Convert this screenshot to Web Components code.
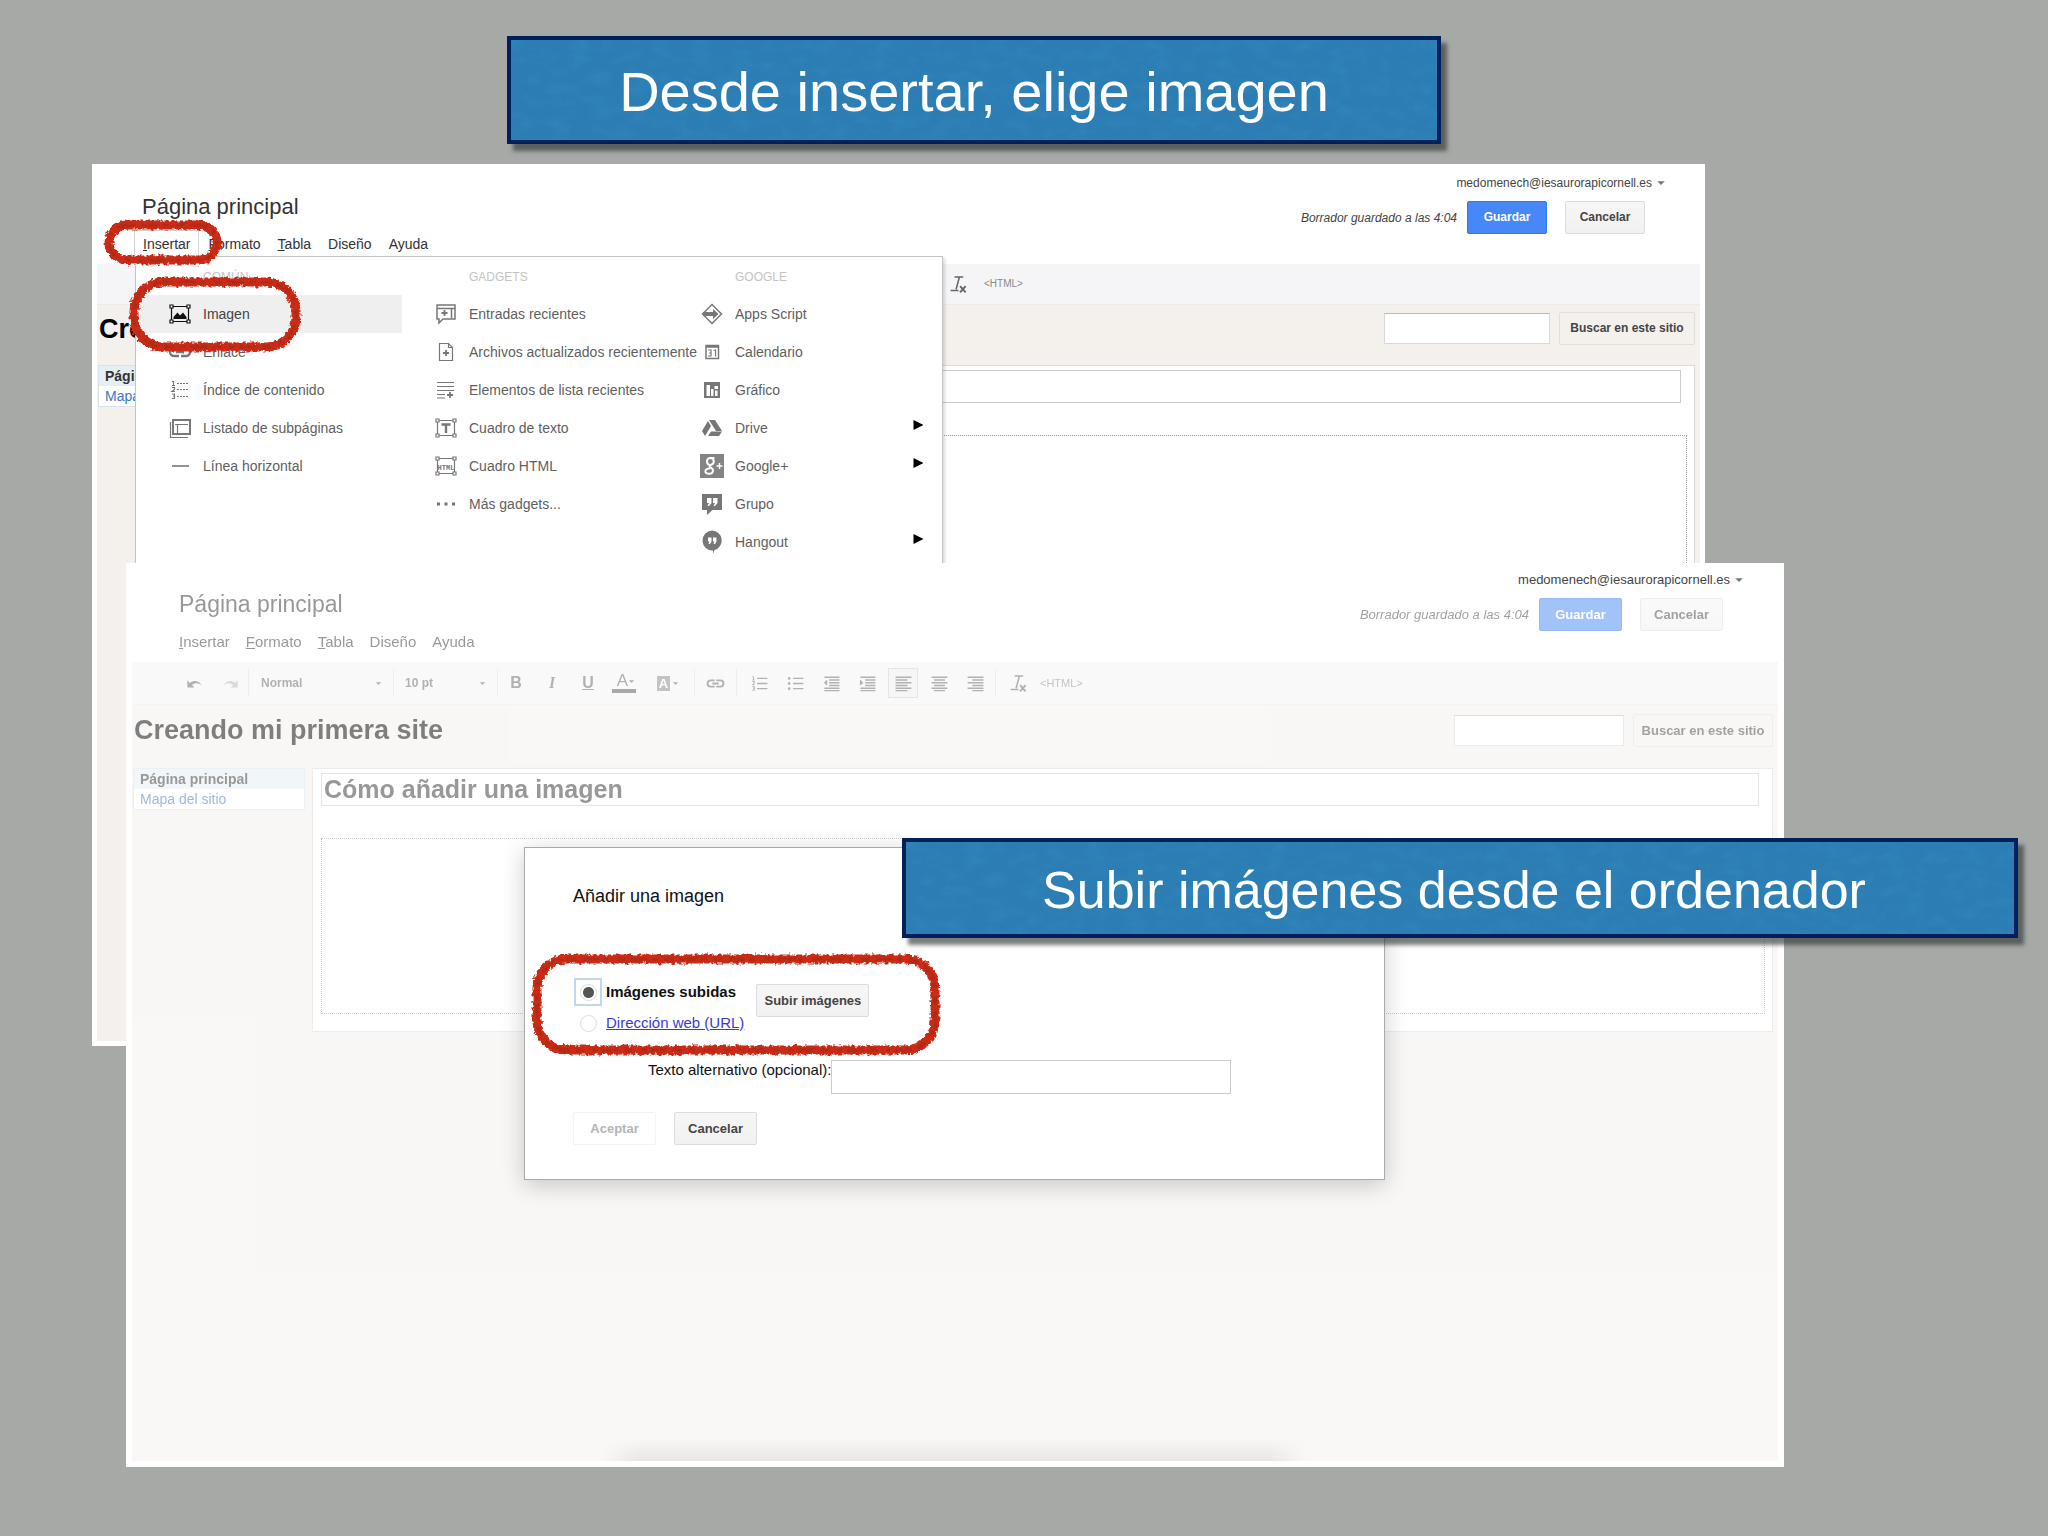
<!DOCTYPE html>
<html lang="es">
<head>
<meta charset="utf-8">
<title>Insertar una imagen</title>
<style>
html,body{margin:0;height:100%}
body{font-family:"Liberation Sans",Arial,sans-serif;background:#a6a9a6}
</style>
</head>
<body>
<tutorial-slide></tutorial-slide>
<script>
const define=(name,html,setup)=>{
  const t=document.createElement('template');t.innerHTML=html;
  customElements.define(name,class extends HTMLElement{
    constructor(){super();this.attachShadow({mode:'open'}).append(t.content.cloneNode(true));}
    connectedCallback(){if(setup&&!this.ready){this.ready=true;setup(this,this.shadowRoot);}}
  });
};
const corners='<path d="M5 4.500H19M5 19.500H19M3.500 6V18M20.500 6V18"/><path fill="#fff" d="M2 3h3v3H2zM19 3h3v3h-3zM2 18h3v3H2zM19 18h3v3h-3z"/>';
const icons={
  imagen:corners+'<path class="f" stroke="none" d="M5.500 17v-2l4-4.500 2.500 3 3-3 3.500 4.500v2z"/>',
  enlace:'<path stroke-width="2.400" d="M11 8H6a4 4 0 0 0 0 8h5M13 8h5a4 4 0 0 1 0 8h-5M8 12h8"/>',
  indice:'<path stroke-dasharray="2 1" d="M9 5.500H21M9 11.500H21M9 18.500H21"/><path d="M4 3.500h1.500V7M4 7.500h3M4 9.500h2.500v2L4 13.500h3M4 16h2.500v4.500H4M5 18h1.500"/>',
  listado:'<path stroke-width="2" d="M5 4h17v14H5z"/><path d="M2.500 6v15.500H20M9.500 8v9M7 8.500h13"/>',
  linea:'<path stroke-width="1.600" d="M4 12H21"/>',
  entradas:'<path stroke-width="1.500" d="M3 3h18v14H9l-4 4v-4H3zM3 6.500h18M17.500 7v9"/><path stroke-width="1.800" d="M10.500 8v6M7.500 11h6"/>',
  archivos:'<path d="M5.500 3.500h9l4 4v13h-13zM14.500 3.500v4h4"/><path stroke-width="1.800" d="M12 10v6M9 13h6"/>',
  elementos:'<path d="M3 4.500H20M3 8.500H20M3 12.500H20M3 16.500H11M3 20H11"/><path stroke-width="1.800" d="M16 14v6M13 17h6"/>',
  texto:corners+'<path stroke-width="2.400" d="M7.500 8.500h9M12 8v9"/>',
  html:corners+'<text x="12" y="15.500" text-anchor="middle" font-size="7" font-weight="700" font-family="Liberation Mono,monospace" stroke="none" class="f">HTML</text>',
  mas:'<path class="f" stroke="none" d="M3 10.500h3v3H3zM10.500 10.500h3v3h-3zM18 10.500h3v3h-3z"/>',
  script:'<path stroke-width="1.500" d="M12 2.500L21.500 12 12 21.500 2.500 12z"/><path class="f" stroke="none" d="M3 10h10V7l5.500 5-5.500 5v-3H3z"/>',
  calendario:'<path stroke-width="1.500" d="M6 5.500h12.500v13H6zM6 7h12"/><path d="M8 10h3v6H8M9 13h2M13.500 10.500l2-.5v6.500"/>',
  grafico:'<path class="f" stroke="none" d="M4 4h16v16H4z"/><path fill="#fff" stroke="none" d="M6.500 7H10v11H6.500zM11 11h2.500v7H11zM14.500 8H18v3h-3.500zM15 12.500h2.500V18H15z"/>',
  drive:'<path class="f" stroke="none" d="M9 4h6l7 11h-6zM8 5l3 5-6 10-3-5zM11 15.500h11L19 20H8z"/>',
  gplus:'<path class="g" stroke="none" d="M0 0h24v24H0z"/><path stroke="#fff" fill="none" stroke-width="2" d="M14.500 4H10a3.500 3.500 0 1 0 1 7M11 4a3.500 3.500 0 0 1 .2 6.800c-2 1-2 2 0 3 2.800 1.500 2.300 6-2 6-5 0-5.500-5 1-5.500"/><path stroke="#fff" stroke-width="1.400" d="M19.500 9v6M16.500 12h6"/>',
  grupo:'<path class="f" stroke="none" d="M2 2h20v16h-9.500L7 23v-5H2z"/><path fill="#fff" stroke="none" d="M7 6h4.500v5L9 14H7.500l1.500-3H7zM13 6h4.500v5L15 14h-1.500l1.500-3h-2z"/>',
  hangout:'<path class="f" stroke="none" d="M12 .5a10 10 0 0 1 2.500 19.600L13 24v-3.500A10 10 0 1 1 12 .5z"/><path fill="#fff" stroke="none" d="M8 7.500h3.500v4L10 14H8.500l1-2.500H8zM13 7.500h3.500v4L15 14h-1.500l1-2.500H13z"/>',
  undo:'<path class="f" stroke="none" d="M3 8v9h9l-3.300-3c4-3.300 8.300-3 12.300.500C18 8.500 11 7 6.200 11.300z"/>',
  redo:'<path class="f" stroke="none" opacity=".45" d="M21 8v9h-9l3.300-3c-4-3.300-8.300-3-12.300.500C6 8.500 13 7 17.800 11.300z"/>',
  ol:'<path stroke-width="1.600" d="M9 5.500H22M9 12H22M9 18.500H22"/><path d="M3 3.500h1.500V7M3 7.500h3M3 9.500h2.500v2L3 13.500h3M3 16h2.500v4.500H3M4 18h1.500"/>',
  ul:'<path stroke-width="1.600" d="M9 5.500H22M9 12H22M9 18.500H22"/><path class="f" d="M3 4.500h2v2H3zM3 11h2v2H3zM3 17.500h2v2H3z"/>',
  outdent:'<path stroke-width="1.800" d="M3 4H22M9 7.500H22M9 11H22M9 14.500H22M3 18H22M3 21h19"/><path class="f" d="M6 8v6l-3-3z"/>',
  indent:'<path stroke-width="1.800" d="M3 4H22M9 7.500H22M9 11H22M9 14.500H22M3 18H22M3 21h19"/><path class="f" d="M3 8v6l3-3z"/>',
  left:'<path stroke-width="1.800" d="M2 4H22M2 7.500H17M2 11H22M2 14.500H17M2 18H22M2 21h15"/>',
  center:'<path stroke-width="1.800" d="M2 4H22M5 7.500H19M2 11H22M5 14.500H19M2 18H22M5 21h14"/>',
  right:'<path stroke-width="1.800" d="M2 4H22M8 7.500H22M2 11H22M8 14.500H22M2 18H22M8 21h14"/>',
  clear:'<path stroke-width="2" d="M7 2.500H18M13 3L9 18M2 19.500H12"/><path stroke-width="2.400" d="M14 14l7 8M21 14l-7 8"/>',
  down:'<path class="f" stroke="none" d="M3 8h18l-9 9z"/>',
  play:'<path class="f" stroke="none" d="M3 2l20 10L3 22z"/>'
};
define('ui-icon',`<style>:host{display:inline-block;width:24px;height:24px;flex:none}svg{display:block;width:100%;height:100%;fill:none;stroke:currentColor;stroke-width:1.200}.f{fill:currentColor}.g{fill:currentColor;opacity:.9}</style><svg viewBox="0 0 24 24" aria-hidden="true"></svg>`,
  (el,r)=>{r.querySelector('svg').innerHTML=icons[el.getAttribute('name')]||'';});

define('slide-banner',`<style>
:host{display:flex;align-items:center;justify-content:center;box-sizing:border-box;border:4px solid #00205b;background:#2b7db3;color:#fff;box-shadow:6px 7px 4px rgba(50,55,55,.65)}
svg{position:absolute;inset:0;width:100%;height:100%;opacity:.3}
h2{position:relative;margin:0;padding-top:4px;font-weight:400;font-size:var(--size,56px);line-height:64px;white-space:nowrap}
</style><svg aria-hidden="true"><filter id="n" x="0" y="0" width="100%" height="100%"><feTurbulence type="fractalNoise" baseFrequency=".05 .09" numOctaves="5" seed="4"/><feColorMatrix values="0 0 0 0 .05  0 0 0 0 .3  0 0 0 0 .55  2 0 0 0 -.8"/></filter><rect width="100%" height="100%" filter="url(#n)"/></svg><h2><slot></slot></h2>`);

define('crayon-ring',`<style>:host{display:block;pointer-events:none}svg{display:block;width:100%;height:100%;overflow:visible}
rect{fill:none;stroke:#cb2a12;stroke-width:9px;x:5px;y:5px;width:calc(100% - 10px);height:calc(100% - 10px);rx:var(--r,30px)}
.b{stroke:#b02a16;stroke-width:3px;stroke-dasharray:9 6 17 4 5 8}</style>
<svg aria-hidden="true"><filter id="r" filterUnits="userSpaceOnUse" x="-12" y="-12" width="460" height="140"><feTurbulence type="fractalNoise" baseFrequency=".3" numOctaves="2" seed="7"/><feDisplacementMap in="SourceGraphic" scale="6" xChannelSelector="R" yChannelSelector="G"/></filter><g filter="url(#r)"><rect/><rect class="b"/></g></svg>`);

define('push-button',`<style>:host{display:inline-block}
button{box-sizing:border-box;width:100%;height:33px;min-width:80px;padding:0;font:bold var(--bf,13px)/31px "Liberation Sans",Arial,sans-serif;color:#444;background:linear-gradient(#f6f6f6,#f1f1f1);border:1px solid #dcdcdc;border-radius:2px;white-space:nowrap;display:block}
:host([kind=primary]) button{background:#4787f7;border-color:#3079ed;color:#fff}
:host([kind=ghost]) button{background:transparent;border-color:#e2dfdb}
:host([kind=off]) button{background:#fff;border-color:#f3f3f3;color:#b5b5b5}
</style><button type="button"><slot></slot></button>`);

define('menu-entry',`<style>:host{display:block}
button{display:flex;align-items:center;gap:11px;width:100%;height:38px;padding:0 18px 0 32px;border:0;background:none;font:14px/20px "Liberation Sans",Arial,sans-serif;color:#5f5f5f;text-align:left;white-space:nowrap}
:host([active]) button{background:#efefef;color:#444}
:host([active]) .i{color:#111}.i{color:#777}
.p{display:none;width:12px;height:12px;color:#000;margin-left:auto;margin-bottom:6px}
:host([more]) .p{display:block}
</style><button type="button"><ui-icon class="i"></ui-icon><span><slot></slot></span><ui-icon class="p" name="play"></ui-icon></button>`,
 (el,r)=>{r.querySelector('.i').shadowRoot.querySelector('svg').innerHTML=icons[el.getAttribute('icon')];});

define('insert-menu',`<style>
:host{display:grid;grid-template-columns:266px 266px 1fr;background:#fff;border:1px solid #c4c4c4;box-shadow:2px 2px 3px rgba(0,0,0,.15);padding:10px 0 16px;box-sizing:border-box}
h3{margin:0;padding-left:67px;font-size:12px;line-height:20px;font-weight:400;color:#c4c4c4;padding-bottom:8px}
</style>
<section><h3>COMÚN</h3><menu-entry icon="imagen" active>Imagen</menu-entry><menu-entry icon="enlace">Enlace</menu-entry><menu-entry icon="indice">Índice de contenido</menu-entry><menu-entry icon="listado">Listado de subpáginas</menu-entry><menu-entry icon="linea">Línea horizontal</menu-entry></section>
<section><h3>GADGETS</h3><menu-entry icon="entradas">Entradas recientes</menu-entry><menu-entry icon="archivos">Archivos actualizados recientemente</menu-entry><menu-entry icon="elementos">Elementos de lista recientes</menu-entry><menu-entry icon="texto">Cuadro de texto</menu-entry><menu-entry icon="html">Cuadro HTML</menu-entry><menu-entry icon="mas">Más gadgets...</menu-entry></section>
<section><h3>GOOGLE</h3><menu-entry icon="script">Apps Script</menu-entry><menu-entry icon="calendario">Calendario</menu-entry><menu-entry icon="grafico">Gráfico</menu-entry><menu-entry icon="drive" more>Drive</menu-entry><menu-entry icon="gplus" more>Google+</menu-entry><menu-entry icon="grupo">Grupo</menu-entry><menu-entry icon="hangout" more>Hangout</menu-entry></section>`);

define('format-bar',`<style>
:host{display:flex;align-items:center;height:100%;color:#666;font-size:12px}
button{all:unset;box-sizing:border-box;width:36px;height:30px;display:flex;align-items:center;justify-content:center;flex:none}
.set{display:flex;margin:0 2px 0 4px}
ui-icon{width:19px;height:19px}
i.s{width:1px;height:28px;background:#ddd;flex:none}
.pick{display:flex;align-items:center;padding:0 11px;box-sizing:border-box}
.pick.a{width:143px;margin-left:1px}.pick.b{width:103px}
select{appearance:none;border:0;background:none;padding:0;margin:0;flex:1;min-width:0;font:bold 12px/20px "Liberation Sans",Arial,sans-serif;color:#666}
ui-icon.d{width:7px;height:7px}
.t{font:bold 16px/20px "Liberation Serif",serif}.t.x{font-family:"Liberation Sans",sans-serif}
.bar{font:17px/16px "Liberation Sans",sans-serif;border-bottom:4px solid #555;padding:0 1px 0 5px;display:flex;align-items:center}
.hl{font:bold 13px/15px "Liberation Sans",sans-serif;color:#fff;background:#888;padding:0 2px;margin-right:2px}
.on{background:#eee;border:1px solid #ccc;width:30px;margin:0 3px}
.code{width:auto;font:11px/20px "Liberation Sans",sans-serif;color:#888}
:host([short]) .full{display:none}.full{display:flex;align-items:center;padding-left:44px}
:host([short]){padding-left:839px}:host([short]) .code{font-size:10px;padding-left:4px}
.clr{width:44px}
</style>
<div class="full">
<button aria-label="Deshacer"><ui-icon name="undo"></ui-icon></button><button aria-label="Rehacer"><ui-icon name="redo"></ui-icon></button><i class="s"></i>
<div class="pick a"><select aria-label="Estilo"><option>Normal</option></select><ui-icon class="d" name="down"></ui-icon></div><i class="s"></i>
<div class="pick b"><select aria-label="Tamaño"><option>10 pt</option></select><ui-icon class="d" name="down"></ui-icon></div><i class="s"></i>
<button class="t x">B</button><button class="t"><em>I</em></button><button class="t x"><u>U</u></button>
<button><span class="bar">A<ui-icon class="d" name="down"></ui-icon></span></button>
<button style="width:52px"><span class="hl">A</span><ui-icon class="d" name="down"></ui-icon></button><i class="s"></i>
<button style="width:41px" aria-label="Enlace"><ui-icon name="enlace"></ui-icon></button><i class="s"></i>
<span class="set"><button aria-label="Lista numerada"><ui-icon name="ol"></ui-icon></button><button aria-label="Lista"><ui-icon name="ul"></ui-icon></button><button aria-label="Menos sangría"><ui-icon name="outdent"></ui-icon></button><button aria-label="Más sangría"><ui-icon name="indent"></ui-icon></button><button class="on" aria-label="Izquierda"><ui-icon name="left"></ui-icon></button><button aria-label="Centro"><ui-icon name="center"></ui-icon></button><button aria-label="Derecha"><ui-icon name="right"></ui-icon></button></span><i class="s"></i>
</div>
<button class="clr" aria-label="Borrar formato"><ui-icon name="clear"></ui-icon></button><button class="code">&lt;HTML&gt;</button>`);

define('site-editor',`<style>
:host{display:flex;flex-direction:column;background:#fff;box-sizing:border-box;padding:0 var(--edge) var(--edge)}
.fade{opacity:var(--fade,1)}
header{display:flex;justify-content:space-between;height:var(--head);box-sizing:border-box;padding-top:var(--top)}
.l{padding:18px 0 0 var(--pad)}
h1{margin:0;font-size:var(--title);line-height:28px;font-weight:400;color:#333}
nav{display:flex;margin:9px 0 0 -8px}
nav button{background:none;border:1px solid transparent;border-bottom:0;padding:0 7px;font:var(--nav)/27px "Liberation Sans",Arial,sans-serif;color:#333;height:27px}
:host([open]) nav button:first-child{border-color:#d5d5d5;background:#fff;padding:0 8px}
:host([open]) nav{gap:1px}
.r{display:flex;flex-direction:column;align-items:flex-end;gap:10px}
.mail{display:flex;align-items:center;gap:4px;padding-right:34px;font-size:var(--small);line-height:16px;color:#444}
.mail ui-icon{width:10px;height:10px;color:#777}
.act{display:flex;align-items:center;padding-right:55px;font-size:var(--small);color:#444;--bf:var(--small)}
.act em{margin-right:10px}.act push-button+push-button{margin-left:18px}
push-button{width:var(--btn)}
.bar{background:#f5f5f7;height:var(--bar);border-bottom:1px solid #eceaea;box-sizing:border-box}
.body{flex:1;display:flex;flex-direction:column;background:#f4f1ed}
.top{display:flex;align-items:center;height:var(--band);padding:0 5px 13px 2px;box-sizing:border-box}
h2{margin:0;flex:1;font-size:27px;line-height:32px;color:#000;white-space:nowrap}
.top input{width:var(--find);height:31px;box-sizing:border-box;border:1px solid #d9d9d9;border-top-color:#bbb;background:#fff;margin-right:9px}
.top push-button{width:var(--go);--bf:var(--small)}
.cols{display:flex;gap:7px;padding:0 5px 0 1px;flex:var(--grow,none)}
aside{width:172px;box-sizing:border-box;border:1px solid #d8e2ea;background:#fff;align-self:flex-start;font-size:14px;line-height:20px;flex:none}
aside strong,aside a{display:block;padding-left:6px;white-space:nowrap;overflow:hidden}
aside strong{background:#e4eef3;color:#333}aside a{color:#3a74c4;text-decoration:none}
main{flex:1;border:1px solid #dedbd6;background:#fff;padding:4px 7px 17px 8px;box-sizing:border-box;display:flex;flex-direction:column}
main input{height:33px;box-sizing:border-box;border:1px solid #ccc;margin-right:6px;padding:0 2px;font:bold 25px/30px "Liberation Sans",Arial,sans-serif;color:#333;background:#fff}
.area{margin-top:32px;min-height:176px;border:1px dotted #999;box-sizing:border-box;flex:1}
</style>
<header><div class="l fade"><h1>Página principal</h1><nav><button><u>I</u>nsertar</button><button><u>F</u>ormato</button><button><u>T</u>abla</button><button>Diseño</button><button>Ayuda</button></nav></div>
<div class="r"><span class="mail">medomenech@iesaurorapicornell.es<ui-icon name="down"></ui-icon></span><div class="act fade"><em>Borrador guardado a las 4:04</em><push-button kind="primary">Guardar</push-button><push-button>Cancelar</push-button></div></div></header>
<div class="bar fade"><format-bar></format-bar></div>
<div class="body fade"><div class="top"><h2><slot></slot></h2><input type="search" aria-label="Buscar"><push-button kind="ghost">Buscar en este sitio</push-button></div>
<div class="cols"><aside><strong>Página principal</strong><a href="#mapa">Mapa del sitio</a></aside><main><input type="text" aria-label="Título de la página"><div class="area"></div></main></div></div>`,
(el,r)=>{if(el.hasAttribute('open'))r.querySelector('format-bar').setAttribute('short','');r.querySelector('main input').value=el.getAttribute('heading')||'';});

define('image-dialog',`<style>
:host{display:block;box-sizing:border-box;background:#fff;border:1px solid #aaa;box-shadow:0 5px 22px rgba(0,0,0,.2);padding:34px 48px 34px;color:#111;font-size:15px}
h2{margin:0 0 67px;font-weight:400;font-size:18px;line-height:28px}
.pick{display:flex;gap:12px;align-items:flex-start}
.opts{display:grid;grid-template-columns:30px auto;row-gap:1px;column-gap:3px;align-items:center;justify-items:center}
.opts>label,.opts>a{justify-self:start;line-height:30px;white-space:nowrap}
input[type=radio]{appearance:none;margin:0;width:17px;height:17px;border:1px solid #ddd;border-radius:50%;background:#fff}
input[type=radio]:checked{background:radial-gradient(circle,#555 5px,#fff 6px)}
.foc{width:24px;height:24px;border:2px solid #bfd8f2;display:flex;align-items:center;justify-content:center}
a{color:#3b3bd0}
.alt{display:flex;align-items:flex-start;margin:22px 105px 18px 75px}
.alt label{line-height:20px;white-space:nowrap}
.alt input{flex:1;min-width:0;height:34px;box-sizing:border-box;border:1px solid #ccc;background:#fff}
.end{display:flex;gap:18px}.end push-button{width:83px}
.pick>push-button{width:113px;margin-top:7px}
</style>
<h2>Añadir una imagen</h2>
<div class="pick"><div class="opts"><span class="foc"><input type="radio" name="o" id="up" checked></span><label for="up"><b>Imágenes subidas</b></label><input type="radio" name="o" aria-labelledby="url"><a id="url" href="#url">Dirección web (URL)</a></div><push-button>Subir imágenes</push-button></div>
<div class="alt"><label for="alt">Texto alternativo (opcional):</label><input id="alt" type="text"></div>
<div class="end"><push-button kind="off">Aceptar</push-button><push-button>Cancelar</push-button></div>`);

define('tutorial-slide',`<style>
:host{display:block;position:relative;min-height:1536px;background:#a6a9a6;overflow:hidden}
.x{position:absolute}
.w1{left:92px;right:343px;top:164px;height:882px;--edge:5px;--pad:45px;--head:100px;--top:11px;--title:22px;--nav:14px;--small:12px;--btn:80px;--bar:41px;--band:60px;--find:166px;--go:136px;--grow:1}
.w2{left:126px;right:264px;top:563px;height:904px;--edge:6px;--pad:47px;--head:99px;--top:9px;--title:23px;--nav:15px;--small:13px;--btn:83px;--bar:43px;--band:63px;--find:170px;--go:140px;--fade:.5}
.menu{left:135px;width:808px;top:256px}
.r1{left:104px;top:220px;width:118px;height:45px;--r:18px}
.r2{left:129px;top:277px;width:172px;height:75px}
.r3{left:532px;top:954px;width:408px;height:101px}
.dlg{left:524px;right:663px;top:847px}
.b1{left:507px;right:607px;top:36px;height:108px}
.b2{left:902px;right:30px;top:838px;height:100px;--size:52px;padding-right:12px}
.dock{left:600px;right:740px;top:1438px;height:23px;background:linear-gradient(transparent,rgba(0,0,0,.07));-webkit-mask:linear-gradient(90deg,transparent,#000 40px,#000 calc(100% - 40px),transparent)}
</style>
<site-editor class="x w1" open>Cre</site-editor>
<insert-menu class="x menu"></insert-menu>
<crayon-ring class="x r1"></crayon-ring><crayon-ring class="x r2"></crayon-ring>
<site-editor class="x w2" heading="Cómo añadir una imagen">Creando mi primera site</site-editor>
<div class="x dock"></div>
<image-dialog class="x dlg"></image-dialog>
<crayon-ring class="x r3"></crayon-ring>
<slide-banner class="x b1">Desde insertar, elige imagen</slide-banner>
<slide-banner class="x b2">Subir imágenes desde el ordenador</slide-banner>`);
</script>
</body>
</html>
